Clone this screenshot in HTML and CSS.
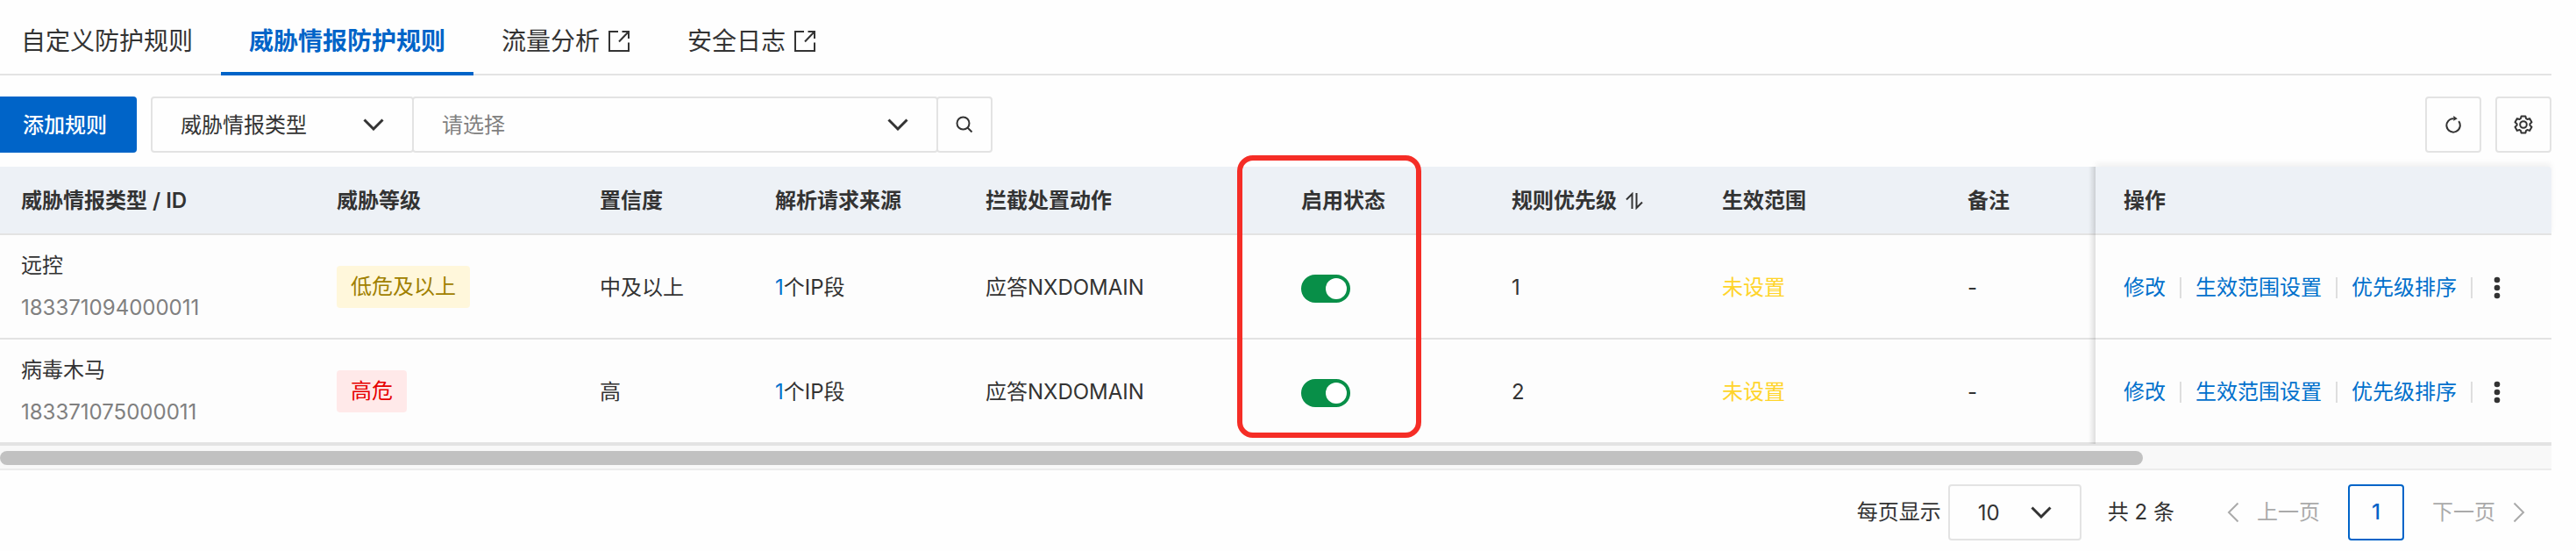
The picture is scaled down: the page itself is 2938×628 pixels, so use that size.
FILE: index.html
```html
<!DOCTYPE html>
<html lang="zh-CN">
<head>
<meta charset="utf-8">
<title>威胁情报防护规则</title>
<link rel="stylesheet" href="styles.css">
</head>
<body>
<svg class="sprite" aria-hidden="true">
  <symbol id="external" viewBox="0 0 24 24"><path d="M11 1H1v22h22V13.500M15.500 1H23v8M23 1 12 12.500"/></symbol>
  <symbol id="down" viewBox="0 0 24 14"><path d="M1.500 1.500 12 12 22.500 1.500"/></symbol>
  <symbol id="left" viewBox="0 0 14 24"><path d="M12.500 1.500 2 12 12.500 22.500"/></symbol>
  <symbol id="right" viewBox="0 0 14 24"><path d="M1.500 1.500 12 12 1.500 22.500"/></symbol>
  <symbol id="dots" viewBox="0 0 8 26"><circle cx="4" cy="4" r="3.300"/><circle cx="4" cy="13" r="3.300"/><circle cx="4" cy="22" r="3.300"/></symbol>
</svg>
<main class="page">
  <nav class="tabs">
    <a class="tab" href="#custom">自定义防护规则</a>
    <a class="tab tab-active" href="#threat" aria-current="page">威胁情报防护规则</a>
    <a class="tab" href="#traffic">流量分析<svg class="icon-external"><use href="#external"/></svg></a>
    <a class="tab" href="#logs">安全日志<svg class="icon-external"><use href="#external"/></svg></a>
  </nav>

  <div class="toolbar">
    <button class="add" type="button">添加规则</button>
    <div class="filter">
      <div class="select filter-field">
        <select aria-label="筛选字段"><option>威胁情报类型</option></select>
        <svg class="icon-down"><use href="#down"/></svg>
      </div>
      <div class="select filter-value">
        <select aria-label="筛选值"><option>请选择</option></select>
        <svg class="icon-down"><use href="#down"/></svg>
      </div>
      <button class="square square-search" type="button" aria-label="搜索">
        <svg class="icon-tool" viewBox="0 0 20 20"><circle cx="8.500" cy="8.500" r="7"/><path d="m13.500 13.500 5 5"/></svg>
      </button>
    </div>
    <div class="tools">
      <button class="square" type="button" aria-label="刷新">
        <svg class="icon-tool" viewBox="0 0 20 20"><path d="M16.200 6.200A7.700 7.700 0 1 1 10.500 3.200"/><path class="solid" d="M10.300 0 14.800 3.200 10.300 5.800z"/></svg>
      </button>
      <button class="square" type="button" aria-label="设置">
        <svg class="icon-gear" viewBox="-12 -12 24 24"><path d="M-2.400-9.600H2.400L3-7 4.400-6 7.100-6.900 9.500-2.700 7.400-.8V.8L9.500 2.700 7.100 6.900 4.400 6 3 7 2.400 9.600H-2.400L-3 7-4.400 6-7.100 6.900-9.500 2.700-7.400.8V-.8L-9.500-2.700-7.100-6.900-4.400-6-3-7z"/><circle r="3.800"/></svg>
      </button>
    </div>
  </div>

  <div class="table-wrap">
    <table class="rules">
      <colgroup>
        <col class="c-type"><col class="c-level"><col class="c-trust"><col class="c-source"><col class="c-action"><col class="c-state"><col class="c-rank"><col class="c-scope"><col><col class="c-ops">
      </colgroup>
      <thead>
        <tr>
          <th>威胁情报类型 / ID</th>
          <th>威胁等级</th>
          <th>置信度</th>
          <th>解析请求来源</th>
          <th>拦截处置动作</th>
          <th class="state-head">启用状态<span class="highlight"></span></th>
          <th><button class="sort" type="button">规则优先级<svg class="icon-sort" viewBox="0 0 20 20"><path d="M7.500 19V2L1 8.500M12.500 1v17l6.500-6.500"/></svg></button></th>
          <th>生效范围</th>
          <th>备注</th>
          <th class="ops-cell">操作</th>
        </tr>
      </thead>
      <tbody>
        <tr>
          <td class="tall"><div class="name">远控</div><div class="id">183371094000011</div></td>
          <td class="tall"><span class="tag tag-low">低危及以上</span></td>
          <td>中及以上</td>
          <td><a class="link" href="#ip">1</a>个IP段</td>
          <td>应答NXDOMAIN</td>
          <td><input class="switch" type="checkbox" aria-label="启用远控规则" checked></td>
          <td>1</td>
          <td class="unset">未设置</td>
          <td>-</td>
          <td class="ops-cell"><div class="ops"><a class="link" href="#edit">修改</a><a class="link" href="#scope">生效范围设置</a><a class="link" href="#rank">优先级排序</a><button class="more" type="button" aria-label="更多"><svg class="icon-dots"><use href="#dots"/></svg></button></div></td>
        </tr>
        <tr>
          <td class="tall"><div class="name">病毒木马</div><div class="id">183371075000011</div></td>
          <td class="tall"><span class="tag tag-high">高危</span></td>
          <td>高</td>
          <td><a class="link" href="#ip">1</a>个IP段</td>
          <td>应答NXDOMAIN</td>
          <td><input class="switch" type="checkbox" aria-label="启用病毒木马规则" checked></td>
          <td>2</td>
          <td class="unset">未设置</td>
          <td>-</td>
          <td class="ops-cell"><div class="ops"><a class="link" href="#edit">修改</a><a class="link" href="#scope">生效范围设置</a><a class="link" href="#rank">优先级排序</a><button class="more" type="button" aria-label="更多"><svg class="icon-dots"><use href="#dots"/></svg></button></div></td>
        </tr>
      </tbody>
    </table>
    <div class="scroll-track"><div class="scroll-thumb"></div></div>
  </div>

  <div class="pager">
    <label class="size-label" for="page-size">每页显示</label>
    <div class="select size-select">
      <select id="page-size"><option>10</option></select>
      <svg class="icon-down"><use href="#down"/></svg>
    </div>
    <span class="total">共 2 条</span>
    <button class="step" type="button" disabled><svg class="icon-side"><use href="#left"/></svg>上一页</button>
    <button class="current" type="button" aria-current="page">1</button>
    <button class="step" type="button" disabled>下一页<svg class="icon-side"><use href="#right"/></svg></button>
  </div>
</main>
</body>
</html>
```

FILE: styles.css
```css
* { box-sizing: border-box; }

body {
  margin: 0;
  background: #fefefe;
  color: #333;
  font: 24px/36px Inter, "Noto Sans CJK SC", sans-serif;
}

button, select { margin: 0; padding: 0; border: 0; background: none; color: inherit; font: inherit; }
a { color: inherit; text-decoration: none; }
svg { display: block; flex: none; fill: none; stroke: currentColor; stroke-width: 2; }
.sprite { position: absolute; width: 0; height: 0; }
.page { padding-right: 28px; }

/* Tabs */
.tabs { display: flex; height: 86px; border-bottom: 2px solid #e3e3e3; }
.tab {
  display: flex;
  align-items: center;
  gap: 10px;
  height: 86px;
  padding: 12px 32px 0;
  border-bottom: 4px solid transparent;
  font-size: 28px;
}
.tab:first-child { padding-left: 24px; }
.tab-active { border-color: #0064c8; color: #0064c8; font-weight: 700; }
.icon-external { width: 24px; height: 24px; margin-right: 2px; }

/* Toolbar */
.toolbar { display: flex; padding: 24px 0 16px; }
.add {
  height: 64px;
  margin-right: 16px;
  padding: 2px 34px 0 26px;
  border-radius: 0 4px 4px 0;
  background: #0064c8;
  color: #fff;
  font-weight: 500;
}
.filter { display: flex; }
.select { display: grid; align-items: center; }
.select select {
  grid-area: 1 / 1;
  width: 100%;
  height: 64px;
  padding: 2px 32px 0;
  border: 2px solid #e3e3e3;
  border-radius: 4px;
  appearance: none;
}
.select .icon-down { grid-area: 1 / 1; justify-self: end; margin-right: 34px; pointer-events: none; }
.icon-down { width: 24px; height: 14px; stroke-width: 3; }
.filter-field { width: 300px; }
.filter-value { width: 600px; margin-left: -2px; color: #333; }
.filter-value select { color: #808080; }
.square {
  display: grid;
  place-items: center;
  width: 64px;
  height: 64px;
  border: 2px solid #e3e3e3;
  border-radius: 4px;
}
.square-search { margin-left: -2px; }
.tools { display: flex; gap: 16px; margin-left: auto; }
.icon-tool { width: 20px; height: 20px; }
.icon-gear { width: 24px; height: 24px; stroke-linejoin: round; }
.solid { fill: currentColor; stroke: none; }

/* Rules table */
.rules { width: 100%; table-layout: fixed; border-collapse: separate; border-spacing: 0; border-bottom: 2px solid #e3e3e3; }
.c-type, .c-action { width: 360px; }
.c-level { width: 300px; }
.c-trust { width: 200px; }
.c-source, .c-state, .c-rank { width: 240px; }
.c-scope { width: 280px; }
.c-ops { width: 520px; }
.rules th, .rules td { padding: 2px 24px 0; border-bottom: 2px solid #e3e3e3; text-align: left; vertical-align: middle; white-space: nowrap; }
.rules th { height: 78px; background: #edf1f6; font-weight: 600; }
.rules td { height: 119px; background: #fdfdfd; }
.rules .tall { padding-top: 0; }
.rules .ops-cell { position: sticky; right: 0; padding: 2px 32px 0; }
.rules th.ops-cell { border-radius: 0 4px 0 0; box-shadow: 0 -4px 6px rgba(0, 0, 0, .05); }
.ops-cell::before {
  content: "";
  position: absolute;
  inset: 0 100% -2px auto;
  width: 8px;
  background: linear-gradient(to left, rgba(0, 0, 0, .12), transparent);
}
.name { margin-bottom: 12px; }
.name, .id { line-height: 36px; }
.id { color: #808080; }
.tag { display: inline-block; padding: 6px 16px; border-radius: 4px; }
.tag-low { background: #fff7db; color: #a08000; }
.tag-high { background: #ffe9e9; color: #e60000; }
.link { color: #0070cc; }
.unset { color: #ffd42a; }

.state-head { position: relative; }
.highlight {
  position: absolute;
  z-index: 2;
  top: -13px;
  left: -49px;
  width: 210px;
  height: 322px;
  border: 6px solid #f52d26;
  border-radius: 18px;
  pointer-events: none;
}

.switch {
  display: block;
  width: 56px;
  height: 32px;
  margin: 2px 0 0;
  padding: 4px;
  border-radius: 16px;
  background: #088f48;
  appearance: none;
}
.switch::before { content: ""; display: block; width: 24px; height: 24px; margin-left: auto; border-radius: 50%; background: #fff; }

.sort { display: flex; align-items: center; gap: 10px; }
.icon-sort { width: 20px; height: 20px; stroke-width: 2; }
.ops { display: flex; align-items: center; }
.ops .link { display: flex; align-items: center; }
.ops .link::after { content: ""; width: 2px; height: 24px; margin: 0 16px; background: #dedede; }
.more { padding: 4px 8px; }
.icon-dots { width: 8px; height: 26px; fill: #333; stroke: none; }

.scroll-track { padding: 6px 0 4px; border-bottom: 2px solid #ececec; background: #f8f8f8; }
.scroll-thumb { width: 84%; height: 16px; border-radius: 8px; background: #c1c1c1; }

/* Pagination */
.pager { display: flex; align-items: center; justify-content: flex-end; padding: 16px 30px 12px 0; }
.size-select { width: 152px; margin: 0 30px 0 8px; }
.total { margin-right: 60px; }
.step { display: flex; align-items: center; gap: 20px; color: #aaa; }
.icon-side { width: 14px; height: 24px; stroke-width: 2; }
.current { width: 64px; height: 64px; margin: 0 32px; border: 2px solid #0064c8; border-radius: 4px; color: #0064c8; font-weight: 500; }
```
